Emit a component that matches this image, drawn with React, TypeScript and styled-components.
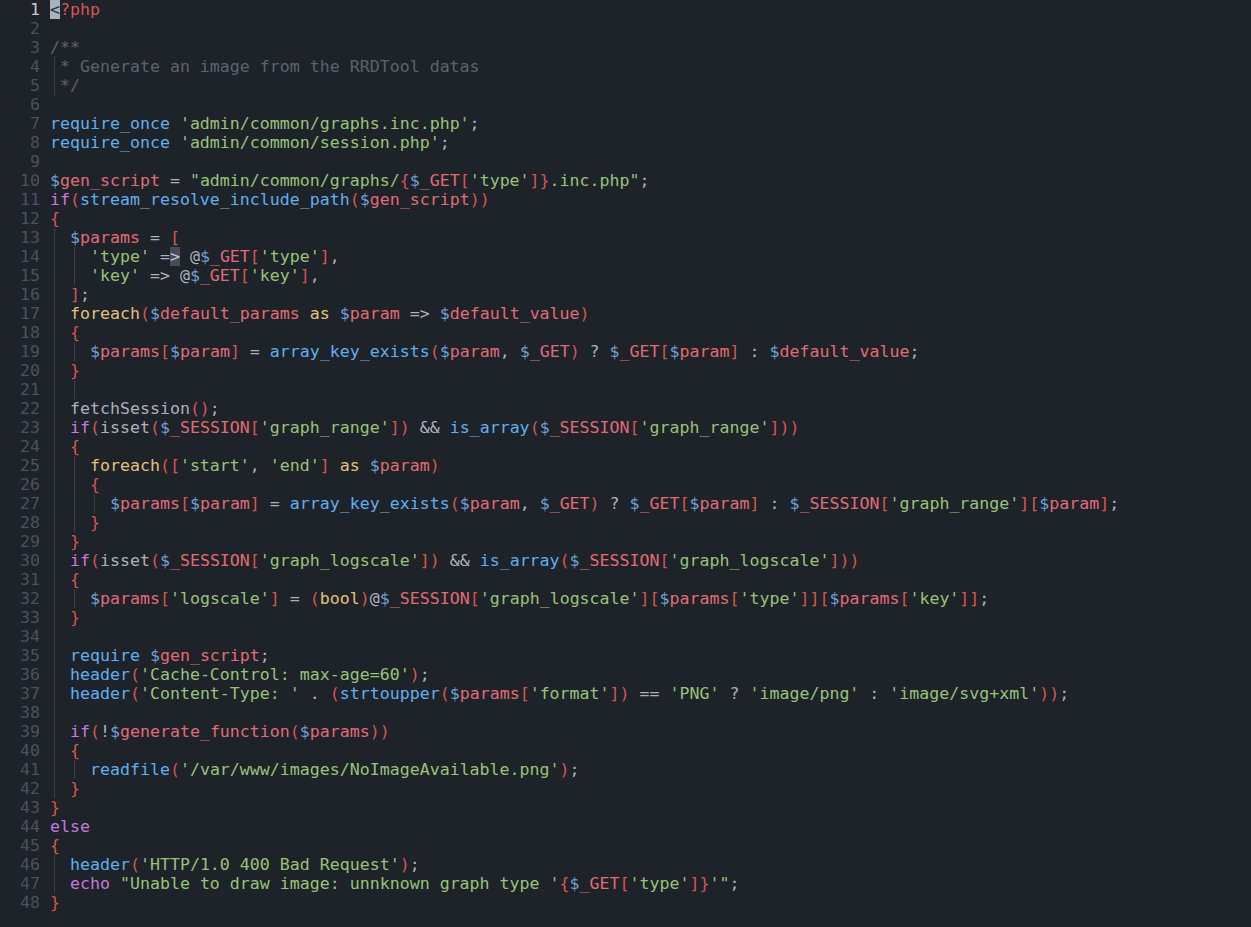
import React from 'react';
import styled, { createGlobalStyle } from 'styled-components';

const GlobalStyle = createGlobalStyle`
  html, body {
    margin: 0;
    padding: 0;
    background: #1e2229;
  }
`;

type Kind =
  | 'plain'
  | 'purple'
  | 'yellow'
  | 'blue'
  | 'str'
  | 'var'
  | 'dollar'
  | 'bracket'
  | 'tag'
  | 'comment';

const COLORS: Record<Kind, string> = {
  plain: '#abb2bf',
  purple: '#c678dd',
  yellow: '#e5c07b',
  blue: '#61afef',
  str: '#98c379',
  var: '#e06c75',
  dollar: '#6f9fd6',
  bracket: '#d6574d',
  tag: '#d6574d',
  comment: '#5c6370',
};

type Tok = { t: string; k: Kind | 'cursor' | 'match' };

const KW_PURPLE = new Set(['if', 'else', 'echo']);
const KW_YELLOW = new Set(['foreach', 'as', 'bool']);
const KW_BLUE = new Set(['require_once', 'require']);
const PLAIN_FN = new Set(['isset', 'fetchSession']);

function tokenize(src: string): Tok[] {
  const out: Tok[] = [];
  const push = (t: string, k: Tok['k']) => {
    const last = out[out.length - 1];
    if (last && last.k === k && k !== 'cursor' && k !== 'match') last.t += t;
    else out.push({ t, k });
  };
  let i = 0;
  while (i < src.length) {
    const c = src[i];
    if (c === '\u00a4') {
      push(src[i + 1], 'cursor');
      i += 2;
      continue;
    }
    if (c === '\u00a7') {
      push(src[i + 1], 'match');
      i += 2;
      continue;
    }
    if (src.startsWith('?php', i)) {
      push('?php', 'tag');
      i += 4;
      continue;
    }
    if (c === '$' && /[A-Za-z_]/.test(src[i + 1] ?? '')) {
      let j = i + 1;
      while (j < src.length && /\w/.test(src[j])) j++;
      push('$', 'dollar');
      push(src.slice(i + 1, j), 'var');
      i = j;
      continue;
    }
    if (/[A-Za-z_]/.test(c)) {
      let j = i;
      while (j < src.length && /\w/.test(src[j])) j++;
      const w = src.slice(i, j);
      let k: Kind = 'plain';
      if (KW_PURPLE.has(w)) k = 'purple';
      else if (KW_YELLOW.has(w)) k = 'yellow';
      else if (KW_BLUE.has(w)) k = 'blue';
      else if (src[j] === '(' && !PLAIN_FN.has(w)) k = 'blue';
      push(w, k);
      i = j;
      continue;
    }
    if (c === "'") {
      const j = src.indexOf("'", i + 1);
      push(src.slice(i, j + 1), 'str');
      i = j + 1;
      continue;
    }
    if (c === '"') {
      let j = i + 1;
      let buf = '"';
      while (j < src.length && src[j] !== '"') {
        if (src[j] === '{' && src[j + 1] === '$') {
          if (buf) push(buf, 'str');
          buf = '';
          const end = src.indexOf('}', j);
          push('{', 'bracket');
          tokenize(src.slice(j + 1, end)).forEach((tk) => push(tk.t, tk.k));
          push('}', 'bracket');
          j = end + 1;
          continue;
        }
        buf += src[j];
        j++;
      }
      buf += '"';
      push(buf, 'str');
      i = j + 1;
      continue;
    }
    if ('()[]{}'.includes(c)) {
      push(c, 'bracket');
      i++;
      continue;
    }
    push(c, 'plain');
    i++;
  }
  return out;
}

const LINES: string[] = [
  '\u00a4<?php',
  '',
  '/**',
  ' * Generate an image from the RRDTool datas',
  ' */',
  '',
  "require_once 'admin/common/graphs.inc.php';",
  "require_once 'admin/common/session.php';",
  '',
  `$gen_script = "admin/common/graphs/{$_GET['type']}.inc.php";`,
  'if(stream_resolve_include_path($gen_script))',
  '{',
  '  $params = [',
  "    'type' =\u00a7> @$_GET['type'],",
  "    'key' => @$_GET['key'],",
  '  ];',
  '  foreach($default_params as $param => $default_value)',
  '  {',
  '    $params[$param] = array_key_exists($param, $_GET) ? $_GET[$param] : $default_value;',
  '  }',
  '    ',
  '  fetchSession();',
  "  if(isset($_SESSION['graph_range']) && is_array($_SESSION['graph_range']))",
  '  {',
  "    foreach(['start', 'end'] as $param)",
  '    {',
  "      $params[$param] = array_key_exists($param, $_GET) ? $_GET[$param] : $_SESSION['graph_range'][$param];",
  '    }',
  '  }',
  "  if(isset($_SESSION['graph_logscale']) && is_array($_SESSION['graph_logscale']))",
  '  {',
  "    $params['logscale'] = (bool)@$_SESSION['graph_logscale'][$params['type']][$params['key']];",
  '  }',
  '  ',
  '  require $gen_script;',
  "  header('Cache-Control: max-age=60');",
  "  header('Content-Type: ' . (strtoupper($params['format']) == 'PNG' ? 'image/png' : 'image/svg+xml'));",
  '  ',
  '  if(!$generate_function($params))',
  '  {',
  "    readfile('/var/www/images/NoImageAvailable.png');",
  '  }',
  '}',
  'else',
  '{',
  "  header('HTTP/1.0 400 Bad Request');",
  `  echo "Unable to draw image: unnknown graph type '{$_GET['type']}'";`,
  '}',
];

const Editor = styled.div`
  font-family: 'DejaVu Sans Mono', monospace;
  font-size: 16.6px;
  line-height: 19px;
  background: #1e2229;
  min-height: 100vh;
  color: #abb2bf;
`;

const Row = styled.div`
  display: flex;
  height: 19px;
`;

const Gutter = styled.span<{ $active?: boolean }>`
  flex: 0 0 40px;
  text-align: right;
  color: ${(p) => (p.$active ? '#c3cbd8' : '#4a5162')};
`;

const Code = styled.span`
  margin-left: 10px;
  white-space: pre;
`;

const Indent = styled.span`
  display: inline-block;
  height: 19px;
  vertical-align: top;
  background: linear-gradient(
    to right,
    transparent 4px,
    #3a3f4a 4px,
    #3a3f4a 5px,
    transparent 5px
  );
`;

const Tk = styled.span<{ $c: string }>`
  color: ${(p) => p.$c};
`;

const Cursor = styled.span`
  display: inline-block;
  height: 19px;
  vertical-align: top;
  background: #a9b2bf;
  color: #2a2f38;
`;

const Match = styled.span`
  display: inline-block;
  height: 19px;
  vertical-align: top;
  background: #464d5a;
  color: #c0c7d2;
`;

function renderLine(src: string) {
  const m = src.match(/^ */);
  const lead = m ? m[0].length : 0;
  const rest = src.slice(lead);
  const isComment = rest.startsWith('/**') || rest.startsWith('*');
  const indents: React.ReactNode[] = [];
  const step = isComment ? 1 : 2;
  for (let i = 0; i + step <= lead; i += step) {
    indents.push(<Indent key={'i' + i}>{' '.repeat(step)}</Indent>);
  }
  if (isComment) {
    return (
      <>
        {indents}
        <Tk $c={COLORS.comment}>{rest}</Tk>
      </>
    );
  }
  const toks = tokenize(rest);
  return (
    <>
      {indents}
      {toks.map((tk, i) => {
        if (tk.k === 'cursor') return <Cursor key={i}>{tk.t}</Cursor>;
        if (tk.k === 'match') return <Match key={i}>{tk.t}</Match>;
        return (
          <Tk key={i} $c={COLORS[tk.k]}>
            {tk.t}
          </Tk>
        );
      })}
    </>
  );
}

export default function App() {
  return (
    <>
      <GlobalStyle />
      <Editor>
        {LINES.map((l, i) => (
          <Row key={i}>
            <Gutter $active={i === 0}>{i + 1}</Gutter>
            <Code>{renderLine(l)}</Code>
          </Row>
        ))}
      </Editor>
    </>
  );
}
